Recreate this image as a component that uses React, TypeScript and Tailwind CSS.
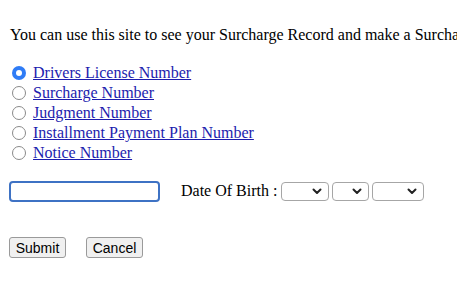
import { useState } from "react";

const options = [
  "Drivers License Number",
  "Surcharge Number",
  "Judgment Number",
  "Installment Payment Plan Number",
  "Notice Number",
];

function Chevron() {
  return (
    <svg width="10" height="7" viewBox="0 0 10 7" className="shrink-0">
      <path d="M1.5 1.5 L5 5 L8.5 1.5" fill="none" stroke="#222" strokeWidth="2" strokeLinecap="round" strokeLinejoin="round" />
    </svg>
  );
}

function SelectBox({ width }: { width: string }) {
  return (
    <div className={`${width} h-[19px] border border-[#a6a6a6] rounded-[4px] bg-white flex items-center justify-end pr-[6px]`}>
      <Chevron />
    </div>
  );
}

function App() {
  const [picked, setPicked] = useState(0);

  return (
    <div className="w-[457px] h-[289px] overflow-hidden bg-white font-['Liberation_Serif',serif] text-[16px] text-black">
      <p className="pl-[10px] pt-[26px] leading-[18px] whitespace-nowrap">
        You can use this site to see your Surcharge Record and make a Surcharge Payment.
      </p>

      <div className="mt-[19px] flex flex-col">
        {options.map((label, i) => (
          <label key={label} className="h-[20px] flex items-center pl-[12px] cursor-pointer" onClick={() => setPicked(i)}>
            {picked === i ? (
              <span className="w-[14px] h-[14px] rounded-full bg-[#2f7cf6] flex items-center justify-center">
                <span className="w-[6px] h-[6px] rounded-full bg-white" />
              </span>
            ) : (
              <span className="w-[14px] h-[14px] rounded-full border border-[#8a8a8a] bg-white" />
            )}
            <a href="#" className="ml-[7px] text-[#1c1cae] underline leading-[18px]">
              {label}
            </a>
          </label>
        ))}
      </div>

      <div className="mt-[16px] pl-[9px] flex items-center">
        <div className="w-[151px] h-[21px] border-2 border-[#3e72c4] rounded-[4px] bg-white" />
        <span className="ml-[21px] mr-[4px]">Date Of Birth :</span>
        <div className="flex gap-[3px]">
          <SelectBox width="w-[48px]" />
          <SelectBox width="w-[37px]" />
          <SelectBox width="w-[52px]" />
        </div>
      </div>

      <div className="mt-[34px] pl-[9px] flex gap-[20px] font-['Liberation_Sans',sans-serif] text-[14px]">
        <button className="w-[57px] h-[21px] border border-[#9a9a9a] rounded-[3px] bg-[#f0f0f0] leading-none">Submit</button>
        <button className="w-[57px] h-[21px] border border-[#9a9a9a] rounded-[3px] bg-[#f0f0f0] leading-none">Cancel</button>
      </div>
    </div>
  );
}

export default App;
